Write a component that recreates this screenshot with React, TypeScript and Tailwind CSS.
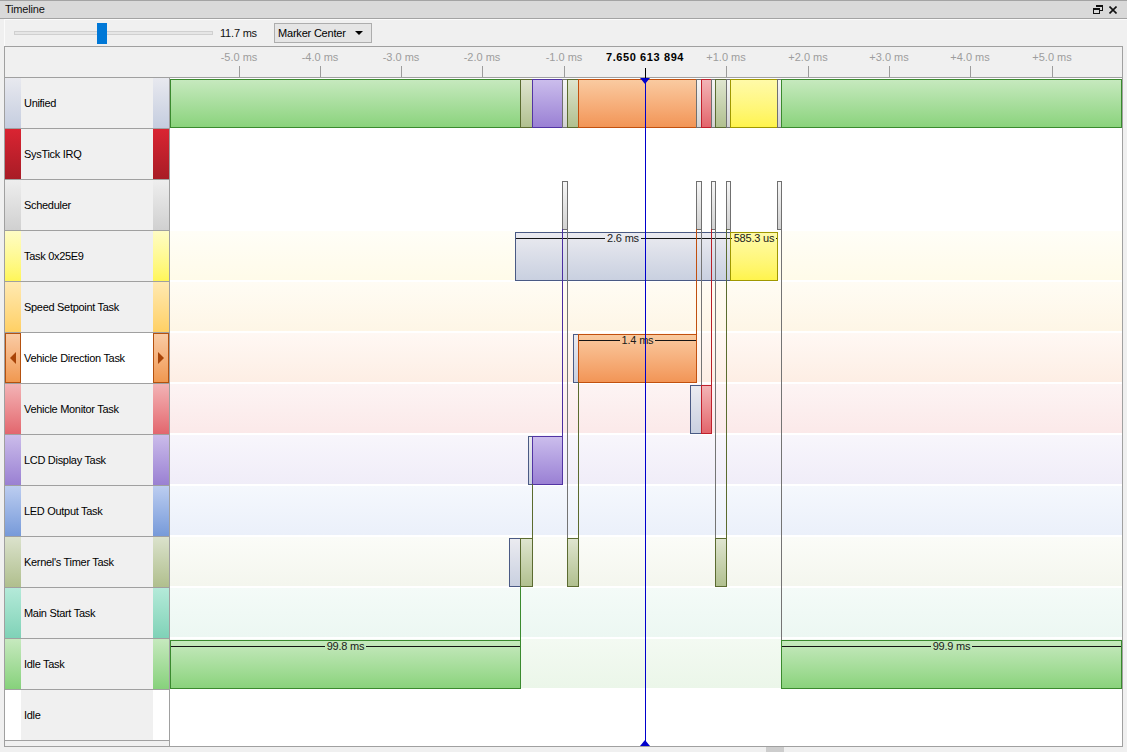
import React from "react";

type Kind = "green" | "olive" | "purple" | "gray" | "orange" | "red" | "yellow" | "wait";

const barStyle: Record<Kind, string> = {
  green: "bg-linear-to-b from-[#c6e9be] to-[#8ad37c] border-[#3a8a2e]",
  olive: "bg-linear-to-b from-[#dfe5cf] to-[#b1c08f] border-[#5b6b30]",
  purple: "bg-linear-to-b from-[#cbbdec] to-[#9a80d4] border-[#5234a4]",
  gray: "bg-linear-to-b from-[#f6f6f6] to-[#d2d2d2] border-[#707070]",
  orange: "bg-linear-to-b from-[#f9caa0] to-[#f29556] border-[#c2500e]",
  red: "bg-linear-to-b from-[#f2b4b6] to-[#e2646c] border-[#c0202c]",
  yellow: "bg-linear-to-b from-[#fffaa8] to-[#fff44c] border-[#a09800]",
  wait: "bg-linear-to-b from-[#ebebf0] to-[#c9d0e0] border-[#4a5a84]",
};

const lineColor = {
  purple: "bg-[#4b2ea0]",
  gray: "bg-[#747474]",
  orange: "bg-[#c0500f]",
  red: "bg-[#b82028]",
  olive: "bg-[#5b6b2e]",
  green: "bg-[#3b8a2f]",
};

const rows = [
  { name: "Unified", strip: "bg-linear-to-b from-[#e8e9ef] to-[#c5cddf]", band: "bg-white" },
  { name: "SysTick IRQ", strip: "bg-linear-to-b from-[#da2432] to-[#a81c26]", band: "bg-white" },
  { name: "Scheduler", strip: "bg-linear-to-b from-[#eeeeee] to-[#d0d0d0]", band: "bg-white" },
  { name: "Task 0x25E9", strip: "bg-linear-to-b from-[#fffcc4] to-[#fff657]", band: "bg-linear-to-b from-[#fffef7] to-[#fffbe9]" },
  { name: "Speed Setpoint Task", strip: "bg-linear-to-b from-[#ffe9b0] to-[#ffd063]", band: "bg-linear-to-b from-[#fffcf4] to-[#fef6e6]" },
  { name: "Vehicle Direction Task", strip: "bg-linear-to-b from-[#f9cba4] to-[#f0984f]", band: "bg-linear-to-b from-[#fff8f4] to-[#fdeee4]" },
  { name: "Vehicle Monitor Task", strip: "bg-linear-to-b from-[#f2b3b6] to-[#e2666e]", band: "bg-linear-to-b from-[#fdf4f4] to-[#fbe9e9]" },
  { name: "LCD Display Task", strip: "bg-linear-to-b from-[#cbbcea] to-[#9a80d2]", band: "bg-linear-to-b from-[#f8f6fc] to-[#f0edf8]" },
  { name: "LED Output Task", strip: "bg-linear-to-b from-[#bccdf0] to-[#779ad9]", band: "bg-linear-to-b from-[#f5f8fd] to-[#ebf0fa]" },
  { name: "Kernel's Timer Task", strip: "bg-linear-to-b from-[#dbe2cc] to-[#b0bf8d]", band: "bg-linear-to-b from-[#fbfcf8] to-[#f4f6ee]" },
  { name: "Main Start Task", strip: "bg-linear-to-b from-[#b4ead9] to-[#7fd2b7]", band: "bg-linear-to-b from-[#f4fbf8] to-[#ecf7f2]" },
  { name: "Idle Task", strip: "bg-linear-to-b from-[#c6e9be] to-[#86d17b]", band: "bg-linear-to-b from-[#f3faf2] to-[#ebf6e9]" },
  { name: "Idle", strip: "bg-white", band: "bg-white" },
];

// page coordinates, x2 exclusive
const bars: { row: number; kind: Kind; x1: number; x2: number; label?: string }[] = [
  { row: 0, kind: "green", x1: 170, x2: 521 },
  { row: 0, kind: "olive", x1: 520, x2: 533 },
  { row: 0, kind: "purple", x1: 532, x2: 563 },
  { row: 0, kind: "gray", x1: 562, x2: 568 },
  { row: 0, kind: "olive", x1: 567, x2: 579 },
  { row: 0, kind: "orange", x1: 578, x2: 697 },
  { row: 0, kind: "gray", x1: 696, x2: 702 },
  { row: 0, kind: "red", x1: 701, x2: 712 },
  { row: 0, kind: "gray", x1: 711, x2: 716 },
  { row: 0, kind: "olive", x1: 715, x2: 727 },
  { row: 0, kind: "gray", x1: 726, x2: 731 },
  { row: 0, kind: "yellow", x1: 730, x2: 778 },
  { row: 0, kind: "gray", x1: 777, x2: 782 },
  { row: 0, kind: "green", x1: 781, x2: 1122 },

  { row: 2, kind: "gray", x1: 562, x2: 568 },
  { row: 2, kind: "gray", x1: 696, x2: 702 },
  { row: 2, kind: "gray", x1: 711, x2: 716 },
  { row: 2, kind: "gray", x1: 726, x2: 731 },
  { row: 2, kind: "gray", x1: 777, x2: 782 },

  { row: 3, kind: "wait", x1: 515, x2: 731, label: "2.6 ms" },
  { row: 3, kind: "yellow", x1: 730, x2: 778, label: "585.3 us" },

  { row: 5, kind: "wait", x1: 573, x2: 579 },
  { row: 5, kind: "orange", x1: 578, x2: 697, label: "1.4 ms" },

  { row: 6, kind: "wait", x1: 690, x2: 702 },
  { row: 6, kind: "red", x1: 701, x2: 712 },

  { row: 7, kind: "wait", x1: 528, x2: 533 },
  { row: 7, kind: "purple", x1: 532, x2: 563 },

  { row: 9, kind: "wait", x1: 509, x2: 521 },
  { row: 9, kind: "olive", x1: 520, x2: 533 },
  { row: 9, kind: "olive", x1: 567, x2: 579 },
  { row: 9, kind: "olive", x1: 715, x2: 727 },

  { row: 11, kind: "green", x1: 170, x2: 521, label: "99.8 ms" },
  { row: 11, kind: "green", x1: 781, x2: 1122, label: "99.9 ms" },
];

const links: { x: number; y1: number; y2: number; c: keyof typeof lineColor }[] = [
  { x: 562, y1: 229, y2: 436, c: "purple" },
  { x: 567, y1: 229, y2: 538, c: "gray" },
  { x: 696, y1: 229, y2: 334, c: "orange" },
  { x: 701, y1: 229, y2: 385, c: "gray" },
  { x: 711, y1: 229, y2: 385, c: "red" },
  { x: 715, y1: 229, y2: 538, c: "gray" },
  { x: 726, y1: 229, y2: 538, c: "olive" },
  { x: 730, y1: 229, y2: 232, c: "gray" },
  { x: 781, y1: 229, y2: 640, c: "gray" },
  { x: 532, y1: 484, y2: 538, c: "olive" },
  { x: 578, y1: 382, y2: 538, c: "olive" },
  { x: 520, y1: 586, y2: 640, c: "green" },
];

const ticks = [-5, -4, -3, -2, -1, 1, 2, 3, 4, 5];
const X0 = 170;
const Y0 = 78;

function RestoreIcon() {
  return (
    <svg width="10" height="9" viewBox="0 0 10 9" fill="#111">
      <rect x="3" y="0" width="7" height="2" />
      <rect x="9" y="0" width="1" height="6" />
      <rect x="7" y="5" width="3" height="1" />
      <rect x="0" y="3" width="7" height="2" />
      <rect x="0" y="3" width="1" height="6" />
      <rect x="6" y="3" width="1" height="6" />
      <rect x="0" y="8" width="7" height="1" />
    </svg>
  );
}

function CloseIcon() {
  return (
    <svg width="8" height="8" viewBox="0 0 8 8" stroke="#111" strokeWidth="1.6">
      <path d="M0.5 0.5L7.5 7.5M7.5 0.5L0.5 7.5" />
    </svg>
  );
}

function LabelRow({ name, strip }: { name: string; strip: string }) {
  const selected = name === "Vehicle Direction Task";
  return (
    <div className="h-[51px] shrink-0 flex border-b border-[#a0a0a0]">
      {selected ? (
        <div className={`w-[16px] flex items-center justify-center border border-[#b4510f] ${strip}`}>
          <div className="w-0 h-0 border-y-[6px] border-y-transparent border-r-[6px] border-r-[#a84408]" />
        </div>
      ) : (
        <div className={`w-[16px] ${strip}`} />
      )}
      <div className={`flex-1 flex items-center pl-[3px] tracking-[-0.3px] ${selected ? "bg-white" : "bg-[#f0f0f0]"}`}>
        {name}
      </div>
      {selected ? (
        <div className={`w-[16px] flex items-center justify-center border border-[#b4510f] ${strip}`}>
          <div className="w-0 h-0 border-y-[6px] border-y-transparent border-l-[6px] border-l-[#a84408]" />
        </div>
      ) : (
        <div className={`w-[16px] ${strip}`} />
      )}
    </div>
  );
}

export default function App() {
  return (
    <div className="w-[1127px] h-[752px] bg-[#f0f0f0] flex flex-col overflow-hidden font-['Liberation_Sans',Arial,sans-serif] text-[11px] text-black select-none">
      {/* title bar */}
      <div className="h-[19px] shrink-0 bg-[#d9d9d9] border-y border-[#a3a3a3] flex items-center pl-[5px] pr-[10px]">
        <span className="text-[#111] tracking-[-0.2px]">Timeline</span>
        <div className="ml-auto flex items-center gap-[6px]">
          <RestoreIcon />
          <CloseIcon />
        </div>
      </div>

      {/* toolbar */}
      <div className="h-[27px] shrink-0 ml-[4px] border-t border-l border-[#fbfbfb] flex items-center pl-[9px]">
        <div className="relative w-[199px] h-[21px] shrink-0">
          <div className="absolute left-0 right-0 top-[8px] h-[4px] bg-[#e6e6e6] border border-[#d0d0d0]" />
          <div className="absolute left-[83px] top-0 w-[10px] h-[21px] bg-[#0078d7]" />
        </div>
        <span className="ml-[7px] w-[54px] shrink-0 tracking-[-0.2px] text-[#111]">11.7 ms</span>
        <div className="w-[98px] h-[20px] shrink-0 border border-[#adadad] bg-[#e5e5e5] flex items-center justify-between pl-[3px] pr-[8px] tracking-[-0.2px]">
          <span>Marker Center</span>
          <div className="w-0 h-0 border-x-[4px] border-x-transparent border-t-[4px] border-t-black" />
        </div>
      </div>

      {/* main panel */}
      <div className="ml-[4px] w-[1119px] h-[701px] shrink-0 border border-[#a0a0a0] flex flex-col">
        {/* ruler */}
        <div className="relative h-[31px] shrink-0 border-b border-[#a0a0a0] bg-[#f0f0f0]">
          {ticks.map((k) => {
            const x = Math.round(645 + k * 81.3) - 5;
            return (
              <React.Fragment key={k}>
                <div className="absolute top-[19px] h-[11px] w-px bg-[#9c9c9c]" style={{ left: x }} />
                <div className="absolute top-[3px] leading-[14px] -translate-x-1/2 whitespace-nowrap text-[#9d9d9d]" style={{ left: x }}>
                  {`${k > 0 ? "+" : "-"}${Math.abs(k)}.0 ms`}
                </div>
              </React.Fragment>
            );
          })}
          <div className="absolute left-[640px] top-[3px] leading-[14px] -translate-x-1/2 whitespace-nowrap font-bold tracking-[0.6px] text-black">
            7.650 613 894
          </div>
          <div className="absolute left-[640px] top-[21px] h-[10px] w-px bg-black" />
        </div>

        {/* body */}
        <div className="flex flex-1 min-h-0">
          <div className="w-[165px] shrink-0 border-r border-[#a0a0a0] flex flex-col">
            {rows.map((r) => (
              <LabelRow key={r.name} name={r.name} strip={r.strip} />
            ))}
            <div className="flex-1 bg-[#f0f0f0]" />
          </div>

          <div className="relative flex-1 bg-white overflow-hidden">
            <div className="flex flex-col">
              {rows.map((r) => (
                <div key={r.name} className="h-[51px] pb-[2px] flex flex-col">
                  <div className={`flex-1 ${r.band}`} />
                </div>
              ))}
            </div>

            {bars.map((b, i) => (
              <div
                key={i}
                className={`absolute border ${barStyle[b.kind]}`}
                style={{ left: b.x1 - X0, top: b.row * 51 + 1, width: b.x2 - b.x1, height: 49 }}
              >
                {b.label && (
                  <div className="absolute left-0 right-0 top-0 h-[11px] flex items-center">
                    <div className="flex-1 h-px bg-[#151515]" />
                    <span className="px-[2px] leading-[11px] whitespace-nowrap text-[#1a1a1a] tracking-[-0.2px]">{b.label}</span>
                    <div className="flex-1 h-px bg-[#151515]" />
                  </div>
                )}
              </div>
            ))}

            {links.map((l, i) => (
              <div
                key={i}
                className={`absolute w-px ${lineColor[l.c]}`}
                style={{ left: l.x - X0, top: l.y1 - Y0, height: l.y2 - l.y1 }}
              />
            ))}

            {/* marker */}
            <div className="absolute left-[475px] top-0 bottom-0 w-px bg-[#0000cc]" />
            <div className="absolute left-[470px] top-0 w-0 h-0 border-x-[5px] border-x-transparent border-t-[6px] border-t-[#0000cc]" />
            <div className="absolute left-[470px] bottom-0 w-0 h-0 border-x-[5px] border-x-transparent border-b-[6px] border-b-[#0000cc]" />
          </div>
        </div>
      </div>

      {/* horizontal scrollbar */}
      <div className="flex-1 flex pl-[766px]">
        <div className="w-[18px] bg-[#cdcdcd]" />
      </div>
    </div>
  );
}
